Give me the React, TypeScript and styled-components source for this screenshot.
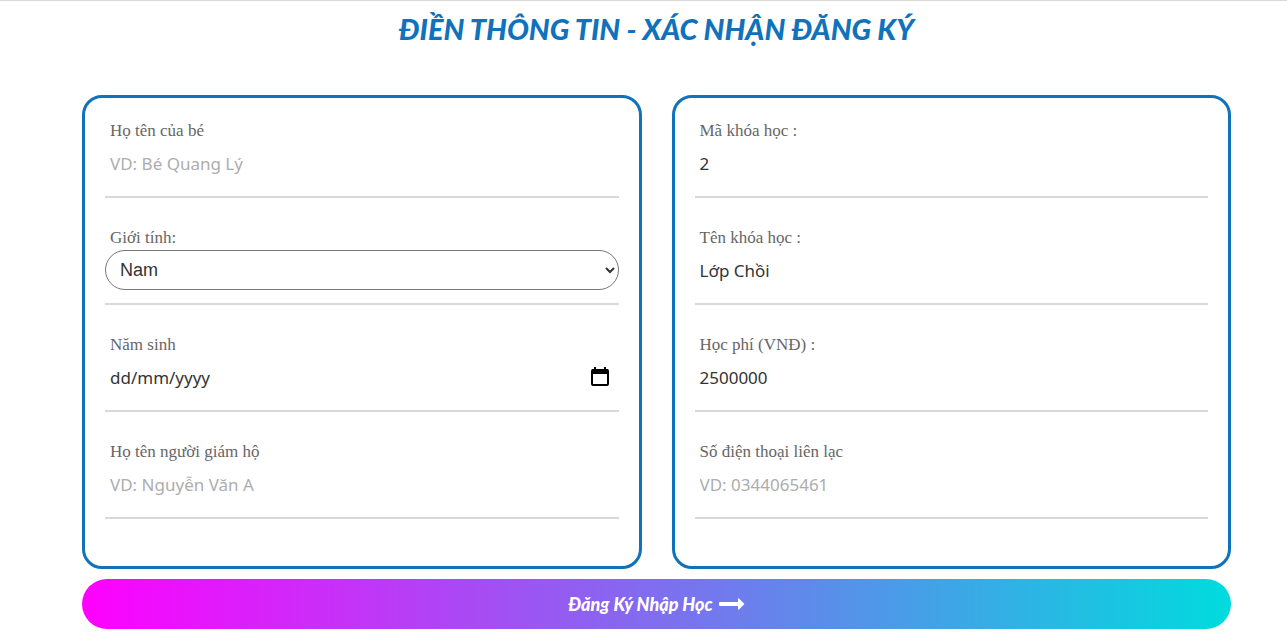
import React, { useId } from "react";
import styled, { createGlobalStyle } from "styled-components";

const GlobalStyle = createGlobalStyle`
  *, *::before, *::after { box-sizing: border-box; }
  body {
    margin: 0;
    background: #fff;
    font-family: "Liberation Serif", serif;
  }
`;

const Page = styled.main`
  border-top: 1px solid #d9d9d9;
  padding: 0 56px 14px 82px;
`;

const Title = styled.h1`
  margin: 0 0 38px;
  padding-top: 8px;
  color: #0f72bb;
  font: italic 900 29px/40px Lato, sans-serif;
  text-align: center;
  white-space: nowrap;
`;

const Panels = styled.div`
  display: grid;
  grid-template-columns: 1fr 1fr;
  gap: 30px;
  padding-top: 8px;
`;

const Panel = styled.section`
  display: flex;
  flex-direction: column;
  gap: 30px;
  padding: 23px 20px 47px;
  border: 3px solid #0f72bb;
  border-radius: 20px;
`;

const FieldBox = styled.div`
  display: flex;
  flex-direction: column;
  height: 77px;
  border-bottom: 2px solid #d9d9d9;
`;

const Label = styled.label`
  padding: 0 0 2px 5px;
  color: #666;
  font-size: 17px;
  line-height: 20px;
`;

const ControlRow = styled.div`
  display: flex;
  align-items: center;
  padding-right: 9px;
`;

const TextInput = styled.input<{ $solidHint?: boolean }>`
  flex: 1;
  min-width: 0;
  height: 40px;
  padding: 0 5px;
  border: 0;
  outline: 0;
  background: transparent;
  color: #333;
  font: 17px "Noto Sans", sans-serif;

  &::placeholder {
    color: ${(p) => (p.$solidHint ? "#333" : "#adadad")};
    opacity: 1;
  }
`;

const Select = styled.select`
  width: 100%;
  height: 40px;
  padding: 0 1px 0 10px;
  border: 1px solid #767676;
  border-radius: 20px;
  background: #fff;
  color: #333;
  font: 18px "Liberation Sans", sans-serif;
`;

const IconButton = styled.button`
  display: flex;
  padding: 0;
  border: 0;
  background: none;
  color: #000;
  cursor: pointer;
`;

const Submit = styled.button`
  display: flex;
  align-items: center;
  justify-content: center;
  gap: 6px;
  width: 100%;
  height: 50px;
  margin-top: 10px;
  border: 0;
  border-radius: 25px;
  background: linear-gradient(to right, #ff00ff, #00dbde);
  color: #fff;
  font: italic 900 18px Lato, sans-serif;
  cursor: pointer;
`;

type FieldProps = { label: string; placeholder?: string; value?: string };

function Field({ label, placeholder, value }: FieldProps) {
  const id = useId();
  return (
    <FieldBox>
      <Label htmlFor={id}>{label}</Label>
      <ControlRow>
        <TextInput id={id} placeholder={placeholder} defaultValue={value} />
      </ControlRow>
    </FieldBox>
  );
}

function GenderField() {
  const id = useId();
  return (
    <FieldBox>
      <Label htmlFor={id}>Giới tính:</Label>
      <Select id={id} defaultValue="Nam">
        <option>Nam</option>
      </Select>
    </FieldBox>
  );
}

function BirthField() {
  const id = useId();
  return (
    <FieldBox>
      <Label htmlFor={id}>Năm sinh</Label>
      <ControlRow>
        <TextInput id={id} placeholder="dd/mm/yyyy" $solidHint />
        <IconButton type="button">
          <svg width="20" height="20" viewBox="0 0 20 20" fill="none" aria-hidden="true">
            <path d="M2 2h16v5H2zM4 0h2v3H4zM14 0h2v3h-2z" fill="currentColor" />
            <rect x="2" y="3" width="16" height="15" rx="1" stroke="currentColor" strokeWidth="2" />
          </svg>
        </IconButton>
      </ControlRow>
    </FieldBox>
  );
}

export default function App() {
  return (
    <>
      <GlobalStyle />
      <Page>
        <form onSubmit={(e) => e.preventDefault()}>
          <Title>ĐIỀN THÔNG TIN - XÁC NHẬN ĐĂNG KÝ</Title>
          <Panels>
            <Panel>
              <Field label="Họ tên của bé" placeholder="VD: Bé Quang Lý" />
              <GenderField />
              <BirthField />
              <Field label="Họ tên người giám hộ" placeholder="VD: Nguyễn Văn A" />
            </Panel>
            <Panel>
              <Field label="Mã khóa học :" value="2" />
              <Field label="Tên khóa học :" value="Lớp Chồi" />
              <Field label="Học phí (VNĐ) :" value="2500000" />
              <Field label="Số điện thoại liên lạc" placeholder="VD: 0344065461" />
            </Panel>
          </Panels>
          <Submit type="submit">
            Đăng Ký Nhập Học
            <svg width="26" height="12" viewBox="0 0 26 12" fill="currentColor" aria-hidden="true">
              <path d="M1 4h18V1q0-1 1-.6l5 5q.6.6 0 1.200l-5 5q-1 .4-1-.6V8H1q-1 0-1-1V5q0-1 1-1z" />
            </svg>
          </Submit>
        </form>
      </Page>
    </>
  );
}
